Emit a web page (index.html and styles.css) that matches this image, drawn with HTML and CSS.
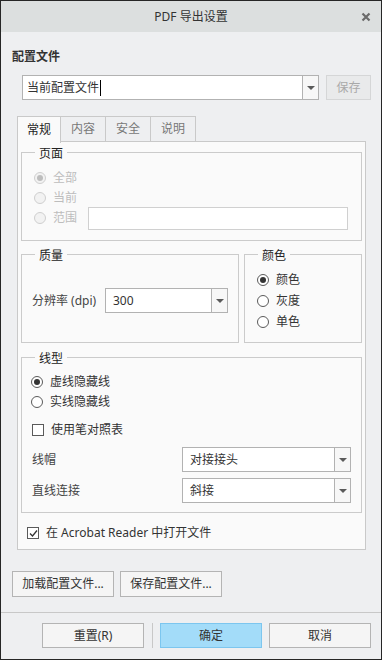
FILE: index.html
```html
<!DOCTYPE html>
<html lang="zh">

<head>
  <meta charset="utf-8">
  <title>PDF 导出设置</title>
  <link rel="stylesheet" href="styles.css">
</head>

<body>
  <div class="window">
    <div class="titlebar">
      <span class="title-spacer"></span>
      <span class="title">PDF 导出设置</span>
      <span class="close">
        <svg width="10" height="10" viewBox="0 0 10 10">
          <path d="M1.5 1.5 L8.5 8.5 M8.5 1.5 L1.5 8.5" stroke="#6b6b6b" stroke-width="2.2" fill="none" />
        </svg>
      </span>
    </div>

    <div class="content">
      <div class="profile-label">配置文件</div>
      <div class="profile-row">
        <div class="combo profile-combo">
          <span class="combo-text">当前配置文件<span class="caret"></span></span>
          <span class="combo-arrow"></span>
        </div>
        <button class="btn btn-save" disabled>保存</button>
      </div>

      <div class="tabs">
        <div class="tab active">常规</div>
        <div class="tab">内容</div>
        <div class="tab">安全</div>
        <div class="tab">说明</div>
      </div>

      <div class="tab-panel">
        <fieldset class="group">
          <legend>页面</legend>
          <div class="group-body page-body">
            <div class="option disabled"><span class="radio checked"></span>全部</div>
            <div class="option disabled"><span class="radio"></span>当前</div>
            <div class="option disabled"><span class="radio"></span>范围<span class="range-input"></span></div>
          </div>
        </fieldset>

        <div class="group-row">
          <fieldset class="group quality">
            <legend>质量</legend>
            <div class="group-body quality-body">
              <div class="field">
                <span class="field-label dpi-label">分辨率 (dpi)</span>
                <div class="combo dpi-combo">
                  <span class="combo-text">300</span>
                  <span class="combo-arrow"></span>
                </div>
              </div>
            </div>
          </fieldset>
          <fieldset class="group color">
            <legend>颜色</legend>
            <div class="group-body color-body">
              <div class="option tall"><span class="radio checked"></span>颜色</div>
              <div class="option tall"><span class="radio"></span>灰度</div>
              <div class="option tall"><span class="radio"></span>单色</div>
            </div>
          </fieldset>
        </div>

        <fieldset class="group linetype">
          <legend>线型</legend>
          <div class="group-body line-body">
            <div class="option"><span class="radio checked"></span>虚线隐藏线</div>
            <div class="option"><span class="radio"></span>实线隐藏线</div>
            <div class="option pen-row"><span class="checkbox"></span>使用笔对照表</div>
            <div class="field line-field">
              <span class="field-label line-label">线帽</span>
              <div class="combo line-combo">
                <span class="combo-text">对接接头</span>
                <span class="combo-arrow"></span>
              </div>
            </div>
            <div class="field line-field join-field">
              <span class="field-label line-label">直线连接</span>
              <div class="combo line-combo">
                <span class="combo-text">斜接</span>
                <span class="combo-arrow"></span>
              </div>
            </div>
          </div>
        </fieldset>

        <div class="option acrobat-row">
          <span class="checkbox checked">
            <svg width="9" height="9" viewBox="0 0 9 9">
              <path d="M1 4.5 L3.5 7 L8 1.5" stroke="#333" stroke-width="1.3" fill="none" />
            </svg>
          </span>在 Acrobat Reader 中打开文件
        </div>
      </div>

      <div class="file-actions">
        <button class="btn btn-file">加载配置文件...</button>
        <button class="btn btn-file">保存配置文件...</button>
      </div>
    </div>

    <div class="footer">
      <button class="btn btn-footer">重置(R)</button>
      <span class="footer-sep"></span>
      <button class="btn btn-footer btn-primary">确定</button>
      <button class="btn btn-footer">取消</button>
    </div>
  </div>
</body>

</html>
```

FILE: styles.css
```css
html,
body {
  margin: 0;
  padding: 0;
  font-family: "Noto Sans", "Noto Sans CJK SC", sans-serif;
  font-size: 12px;
  line-height: 16px;
  color: #333;
}

.window {
  width: 382px;
  height: 660px;
  box-sizing: border-box;
  border: 1px solid #262626;
  background: #eeeff1;
  display: flex;
  flex-direction: column;
}

/* title bar */
.titlebar {
  height: 31px;
  background: #dcdfdf;
  display: flex;
  align-items: center;
}

.title-spacer,
.close {
  width: 30px;
  display: flex;
  justify-content: center;
}

.close svg {
  display: block;
}

.title {
  flex: 1;
  text-align: center;
  color: #333;
}

.content {
  padding: 0 10px 0 11px;
}

.profile-label {
  margin-top: 17px;
  font-weight: bold;
  color: #333;
}

.profile-row {
  display: flex;
  margin: 10px 0 0 10px;
  gap: 7px;
}

/* combo boxes */
.combo {
  height: 25px;
  box-sizing: border-box;
  border: 1px solid #b2b2b2;
  background: white;
  display: flex;
  align-items: center;
}

.combo-text {
  flex: 1;
  padding-left: 7px;
  display: flex;
  align-items: center;
  color: #333;
}

.profile-combo {
  width: 297px;
}

.profile-combo .combo-text {
  padding-left: 4px;
}

.caret {
  display: inline-block;
  width: 1px;
  height: 16px;
  background: #000;
  margin-left: 1px;
}

.combo-arrow {
  width: 15px;
  height: 100%;
  border-left: 1px solid #b2b2b2;
  background: #f7f7f7;
  display: flex;
  align-items: center;
  justify-content: center;
}

.combo-arrow::after {
  content: "";
  border-left: 4px solid transparent;
  border-right: 4px solid transparent;
  border-top: 4px solid #5a5a5a;
}

/* buttons */
.btn {
  font-family: inherit;
  font-size: 12px;
  line-height: 16px;
  color: #333;
  background: #f5f5f5;
  border: 1px solid #b4b4b4;
  padding: 0;
  box-sizing: border-box;
}

.btn-save {
  width: 45px;
  height: 25px;
  background: #e9eaeb;
  border-color: #d5d6d7;
  color: #a9a9a9;
}

/* tabs */
.tabs {
  display: flex;
  margin: 16px 0 0 5px;
  height: 25px;
}

.tab {
  padding: 0 10px;
  border-top: 1px solid #c9c9c9;
  border-right: 1px solid #c9c9c9;
  display: flex;
  align-items: center;
  color: #777;
  background: #eeeff1;
}

.tab.active {
  padding: 0 9px;
  border-left: 1px solid #c9c9c9;
  background: #fafafa;
  color: #222;
  height: 26px;
  position: relative;
  z-index: 1;
}

.tab-panel {
  margin: 0 5px;
  border: 1px solid #c9c9c9;
  background: #fafafa;
  padding: 0 3px 6px;
}

/* groups */
.group {
  margin: 0;
  padding: 0;
  min-width: 0;
  border: 1px solid #cbcbcb;
}

.group legend {
  margin-left: 13px;
  padding: 4px 4px 0;
  line-height: 16px;
  color: #222;
}

.page-body {
  padding: 6px 13px 12px 12px;
}

.group-row {
  display: flex;
  gap: 5px;
  margin-top: 3px;
}

.quality {
  width: 218px;
  flex: none;
  box-sizing: border-box;
}

.color {
  flex: 1;
}

.quality-body {
  padding: 24px 0 0 10px;
}

.color-body {
  padding: 5px 0 10px 12px;
}

.linetype {
  margin-top: 4px;
}

.line-body {
  padding: 5px 10px 9px 9px;
}

/* options */
.option {
  height: 20px;
  display: flex;
  align-items: center;
  color: #333;
}

.option.tall {
  height: 21px;
}

.option.disabled {
  color: #bdbdbd;
}

.radio {
  width: 12px;
  height: 12px;
  box-sizing: border-box;
  border: 1px solid #5a5a5a;
  border-radius: 50%;
  background: white;
  margin-right: 7px;
  display: flex;
  align-items: center;
  justify-content: center;
}

.radio.checked::after {
  content: "";
  width: 6px;
  height: 6px;
  border-radius: 50%;
  background: #333;
}

.disabled .radio {
  border-color: #cfcfcf;
  background: #f2f2f2;
}

.disabled .radio.checked::after {
  background: #bdbdbd;
}

.range-input {
  flex: 1;
  height: 23px;
  flex-shrink: 0;
  box-sizing: border-box;
  margin-left: 11px;
  border: 1px solid #d0d0d0;
  background: white;
}

.checkbox {
  width: 12px;
  height: 12px;
  box-sizing: border-box;
  border: 1px solid #5a5a5a;
  background: white;
  margin-right: 7px;
  display: flex;
  align-items: center;
  justify-content: center;
}

.pen-row {
  margin-top: 8px;
}

.pen-row .checkbox {
  margin-left: 1px;
}

/* label + combo rows */
.field {
  display: flex;
  align-items: center;
}

.field-label {
  flex: none;
  color: #444;
}

.dpi-label {
  width: 73px;
}

.dpi-combo {
  width: 123px;
}

.line-field {
  margin-top: 7px;
  padding-left: 1px;
}

.join-field {
  margin-top: 6px;
}

.line-label {
  width: 150px;
}

.line-combo {
  width: 169px;
}

.acrobat-row {
  margin: 10px 0 0 6px;
}

/* bottom actions */
.file-actions {
  display: flex;
  gap: 6px;
  margin-top: 21px;
}

.btn-file {
  width: 102px;
  height: 26px;
}

.footer {
  margin-top: 15px;
  border-top: 1px solid #c8c8c8;
  padding: 10px 10px 0;
  display: flex;
  justify-content: flex-end;
  align-items: center;
}

.btn-footer {
  width: 102px;
  height: 25px;
}

.footer-sep {
  width: 1px;
  height: 25px;
  background: #c8c8c8;
  margin: 0 7px 0 8px;
}

.btn-primary {
  background: #a3dcf9;
  border-color: #7cc6ef;
  margin-right: 7px;
}
```
